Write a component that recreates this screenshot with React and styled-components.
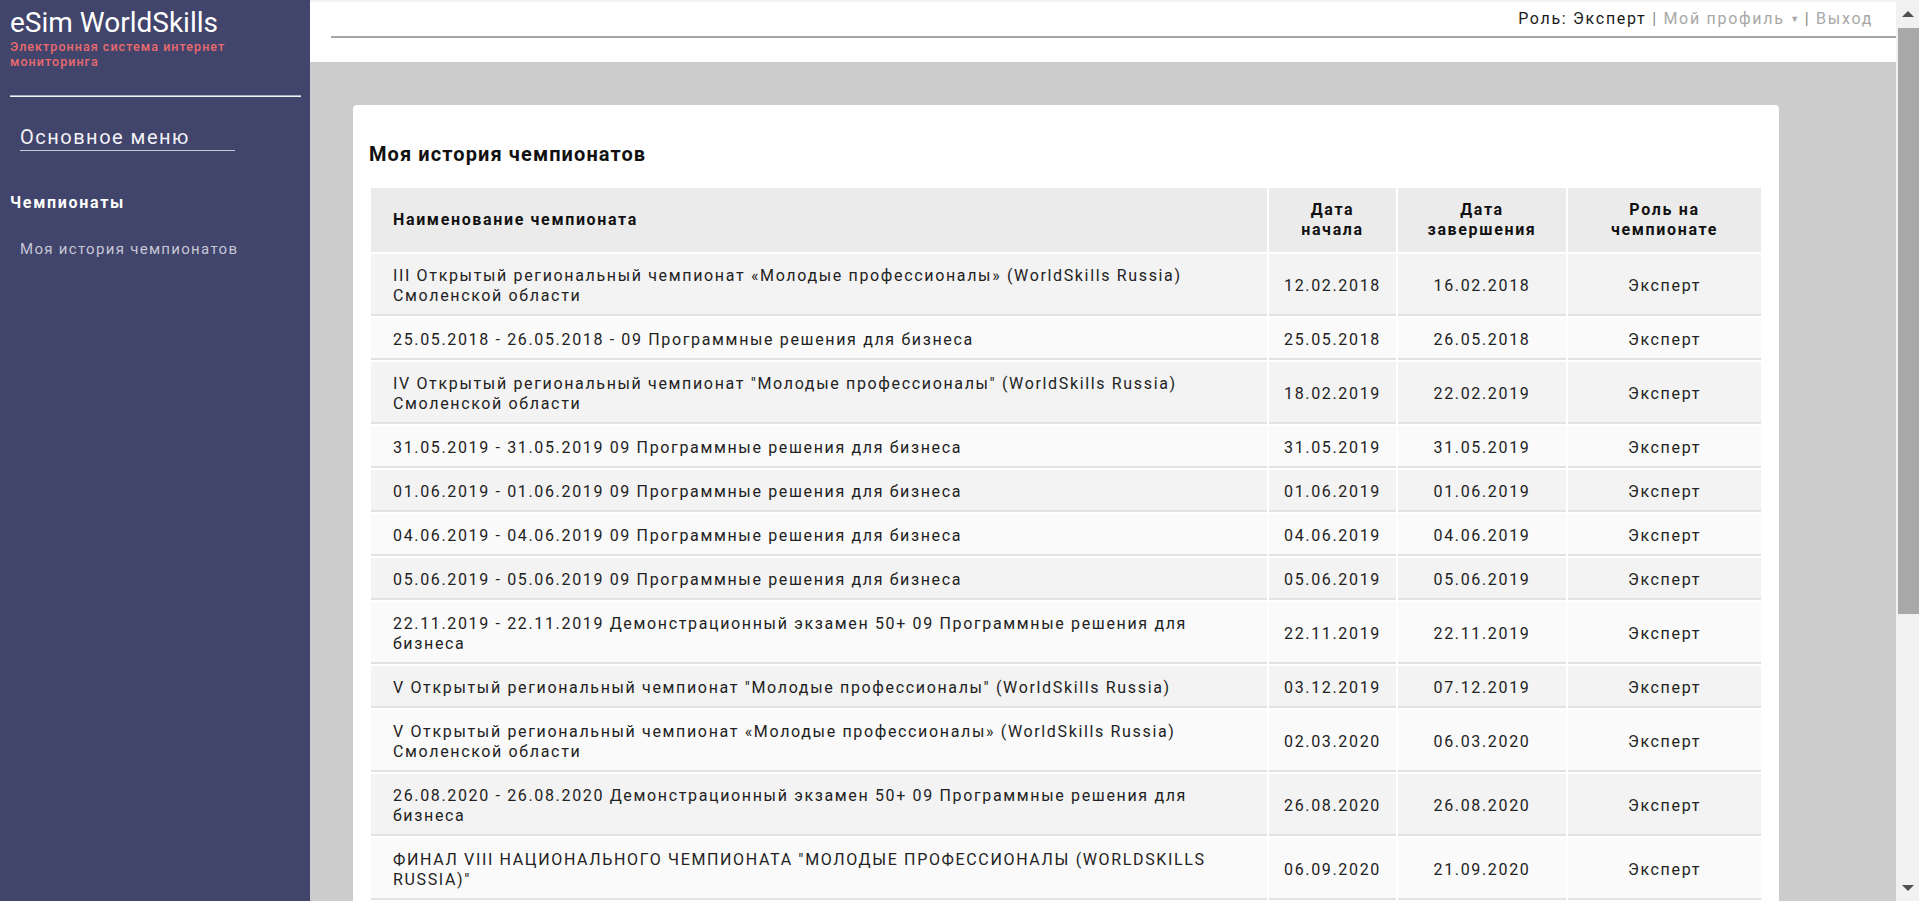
import React from "react";
import styled, { createGlobalStyle } from "styled-components";

const GlobalStyle = createGlobalStyle`
    html, body {
        margin: 0;
        padding: 0;
    }

    body {
        font-family: Roboto, "Noto Sans", "Liberation Sans", sans-serif;
        background: #cccccc;
        color: #222222;
    }
`;

const campeonatos = [
    ["III Открытый региональный чемпионат «Молодые профессионалы» (WorldSkills Russia) Смоленской области", "12.02.2018", "16.02.2018"],
    ["25.05.2018 - 26.05.2018 - 09 Программные решения для бизнеса", "25.05.2018", "26.05.2018"],
    ["IV Открытый региональный чемпионат \"Молодые профессионалы\" (WorldSkills Russia) Смоленской области", "18.02.2019", "22.02.2019"],
    ["31.05.2019 - 31.05.2019 09 Программные решения для бизнеса", "31.05.2019", "31.05.2019"],
    ["01.06.2019 - 01.06.2019 09 Программные решения для бизнеса", "01.06.2019", "01.06.2019"],
    ["04.06.2019 - 04.06.2019 09 Программные решения для бизнеса", "04.06.2019", "04.06.2019"],
    ["05.06.2019 - 05.06.2019 09 Программные решения для бизнеса", "05.06.2019", "05.06.2019"],
    ["22.11.2019 - 22.11.2019 Демонстрационный экзамен 50+ 09 Программные решения для бизнеса", "22.11.2019", "22.11.2019"],
    ["V Открытый региональный чемпионат \"Молодые профессионалы\" (WorldSkills Russia)", "03.12.2019", "07.12.2019"],
    ["V Открытый региональный чемпионат «Молодые профессионалы» (WorldSkills Russia) Смоленской области", "02.03.2020", "06.03.2020"],
    ["26.08.2020 - 26.08.2020 Демонстрационный экзамен 50+ 09 Программные решения для бизнеса", "26.08.2020", "26.08.2020"],
    ["ФИНАЛ VIII НАЦИОНАЛЬНОГО ЧЕМПИОНАТА \"МОЛОДЫЕ ПРОФЕССИОНАЛЫ (WORLDSKILLS RUSSIA)\"", "06.09.2020", "21.09.2020"],
];

export default function App() {
    return (
        <>
            <GlobalStyle />
            <Pagina>
                <Menu>
                    <Logo>eSim WorldSkills</Logo>
                    <Subtitulo>Электронная система интернет мониторинга</Subtitulo>
                    <Divisor />
                    <MenuTitulo>Основное меню</MenuTitulo>
                    <Secao>Чемпионаты</Secao>
                    <MenuLink>Моя история чемпионатов</MenuLink>
                </Menu>
                <Principal>
                    <Topo>
                        <Usuario>
                            <span>Роль: Эксперт</span>
                            <Separador> | </Separador>
                            <Link>Мой профиль <Seta>▼</Seta></Link>
                            <Separador $olive> | </Separador>
                            <Link>Выход</Link>
                        </Usuario>
                    </Topo>
                    <Conteudo>
                        <Cartao>
                            <Titulo>Моя история чемпионатов</Titulo>
                            <Tabela>
                                <thead>
                                    <tr>
                                        <Th $left>Наименование чемпионата</Th>
                                        <Th $width={111}>Дата<br />начала</Th>
                                        <Th $width={152}>Дата<br />завершения</Th>
                                        <Th $width={177}>Роль на<br />чемпионате</Th>
                                    </tr>
                                </thead>
                                <tbody>
                                    {campeonatos.map(([nome, inicio, fim], i) => (
                                        <Linha key={i} $par={i % 2 === 1}>
                                            <Td $left>{nome}</Td>
                                            <Td>{inicio}</Td>
                                            <Td>{fim}</Td>
                                            <Td>Эксперт</Td>
                                        </Linha>
                                    ))}
                                </tbody>
                            </Tabela>
                        </Cartao>
                    </Conteudo>
                </Principal>
                <Rolagem>
                    <BotaoRolagem $altura={28}><Triangulo $cima /></BotaoRolagem>
                    <Polegar />
                    <BotaoRolagem $altura={26} $fim><Triangulo /></BotaoRolagem>
                </Rolagem>
            </Pagina>
        </>
    );
}

const Pagina = styled.div`
    display: flex;
    height: 100vh;
    overflow: hidden;
`;

const Menu = styled.aside`
    width: 310px;
    flex-shrink: 0;
    background-color: #41446b;
    box-sizing: border-box;
    padding-top: 7px;
`;

const Logo = styled.div`
    padding-left: 10px;
    font-size: 28px;
    line-height: 32px;
    color: #ffffff;
`;

const Subtitulo = styled.div`
    padding-left: 10px;
    width: 240px;
    font-size: 12.5px;
    line-height: 15px;
    font-weight: 500;
    letter-spacing: 1.05px;
    color: #e96b6f;
`;

const Divisor = styled.hr`
    margin: 26px 9px 0 10px;
    height: 0;
    border: none;
    border-top: 1px solid #a9abbf;
    border-bottom: 1px solid #f4f4f8;
`;

const MenuTitulo = styled.div`
    margin: 28px 0 0 20px;
    width: 215px;
    padding-bottom: 1px;
    border-bottom: 1px solid #c9cad6;
    font-size: 20px;
    line-height: 24px;
    letter-spacing: 1.5px;
    color: #f2f2f6;
`;

const Secao = styled.div`
    margin: 42px 0 0 10px;
    font-size: 16px;
    line-height: 20px;
    font-weight: 700;
    letter-spacing: 1.7px;
    color: #ffffff;
`;

const MenuLink = styled.div`
    margin: 26px 0 0 20px;
    font-size: 15px;
    line-height: 20px;
    letter-spacing: 1.3px;
    color: #c6c7d6;
`;

const Principal = styled.main`
    flex: 1;
    min-width: 0;
    display: flex;
    flex-direction: column;
    overflow: hidden;
`;

const Topo = styled.header`
    height: 62px;
    flex-shrink: 0;
    box-sizing: border-box;
    background: #ffffff;
    border-top: 2px solid #f2f2f2;
`;

const Usuario = styled.div`
    margin-left: 21px;
    height: 36px;
    box-sizing: border-box;
    padding: 7px 23px 0 0;
    border-bottom: 2px solid #a6a6a6;
    text-align: right;
    font-size: 16px;
    line-height: 20px;
    letter-spacing: 1.7px;
    color: #1a1a1a;
`;

const Separador = styled.span`
    color: ${(props) => (props.$olive ? "#8b8b6e" : "#8a8a8a")};
`;

const Link = styled.span`
    color: #a8a8a8;
`;

const Seta = styled.span`
    font-size: 9px;
    vertical-align: 2px;
    letter-spacing: 0;
`;

const Conteudo = styled.section`
    flex: 1;
    background: #cccccc;
    padding: 43px 117px 0 43px;
`;

const Cartao = styled.div`
    background: #ffffff;
    border-radius: 4px;
    padding: 0 16px 30px 16px;
`;

const Titulo = styled.h3`
    margin: 0;
    padding: 37px 0 20px 0;
    font-size: 20px;
    line-height: 24px;
    font-weight: 700;
    letter-spacing: 1.1px;
    color: #111111;
`;

const Tabela = styled.table`
    width: 100%;
    border-spacing: 2px;
    font-size: 16px;
    line-height: 20px;
    letter-spacing: 1.65px;
`;

const Th = styled.th`
    width: ${(props) => (props.$width ? `${props.$width}px` : "auto")};
    background: #ebebeb;
    padding: 12px ${(props) => (props.$left ? "22px" : "8px")};
    text-align: ${(props) => (props.$left ? "left" : "center")};
    font-weight: 700;
    color: #111111;
`;

const Linha = styled.tr`
    background: ${(props) => (props.$par ? "#fafafa" : "#f3f3f3")};
`;

const Td = styled.td`
    padding: 12px ${(props) => (props.$left ? "22px" : "8px")} 8px;
    border-bottom: 2px solid #e2e2e2;
    text-align: ${(props) => (props.$left ? "left" : "center")};
    color: #222222;
`;

const Rolagem = styled.div`
    width: 23px;
    flex-shrink: 0;
    display: flex;
    flex-direction: column;
    background: #f1f1f1;
`;

const BotaoRolagem = styled.div`
    height: ${(props) => props.$altura}px;
    flex-shrink: 0;
    display: flex;
    align-items: center;
    justify-content: center;
    margin-top: ${(props) => (props.$fim ? "auto" : "0")};
`;

const Triangulo = styled.div`
    width: 0;
    height: 0;
    border-left: 6px solid transparent;
    border-right: 6px solid transparent;
    ${(props) =>
        props.$cima
            ? "border-bottom: 6px solid #505050;"
            : "border-top: 6px solid #505050;"}
`;

const Polegar = styled.div`
    height: 586px;
    flex-shrink: 0;
    margin-left: 2px;
    background: #a8a8a8;
`;
